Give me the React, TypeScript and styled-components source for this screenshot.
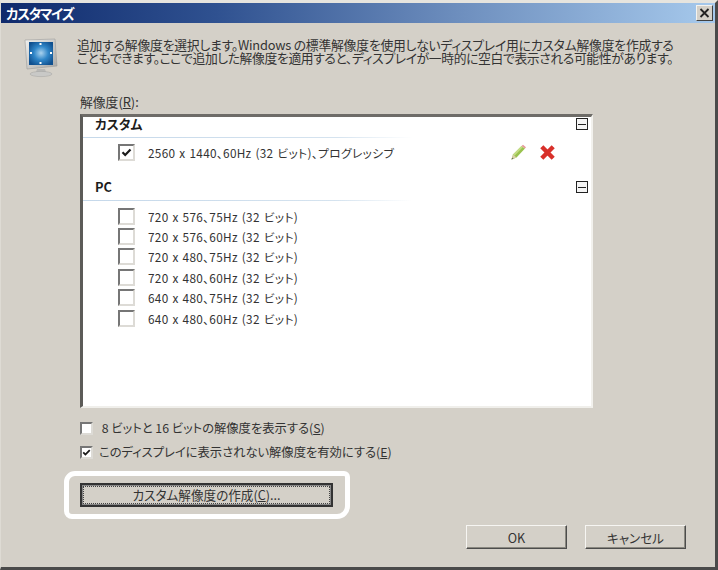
import React from "react";
import styled, { createGlobalStyle } from "styled-components";

const Global = createGlobalStyle`
  html, body { margin: 0; padding: 0; background: #d4d0c8; }
  body { font-family: "Noto Sans CJK JP", "Liberation Sans", sans-serif; color: #2a2a2a; font-feature-settings: "palt"; }
`;
const Win = styled.div`
  width: 718px; height: 570px; box-sizing: border-box; background: #d4d0c8;
  border-style: solid; border-width: 3px 3px 3px 1px;
  border-color: #e6e4de #4a4a4a #4a4a4a #dedbd4;
  display: flex; flex-direction: column; overflow: hidden;
`;
const TitleBar = styled.div`
  height: 20px; flex: none; display: flex; align-items: center; justify-content: space-between;
  padding: 0 2px 0 5px;
  background: linear-gradient(90deg, #0f2a6c 0%, #2f5190 30%, #6f90bf 65%, #a6c9ec 100%);
`;
const TitleText = styled.span`
  color: #fff; font-weight: 700; font-size: 13.5px; line-height: 20px; letter-spacing: -1.2px;
`;
const CloseBtn = styled.div`
  width: 17px; height: 16px; box-sizing: border-box; background: #d4d0c8; display: flex; align-items: center; justify-content: center;
  border: 1px solid; border-color: #f4f3ef #404040 #404040 #f4f3ef;
`;
const Body = styled.div`
  flex: 1; display: flex; flex-direction: column; padding: 15px 0 0 23px; position: relative;
`;
const Intro = styled.div`display: flex; gap: 19px; height: 55px;`;
const Description = styled.div`
  white-space: nowrap; font-size: 12.8px; line-height: 13px; color: #333;
`;
const DescLine = styled.div<{ $tight: number }>`
  letter-spacing: ${(p) => p.$tight}px;
`;
const Content = styled.div`
  margin-left: 56px; width: 513px; display: flex; flex-direction: column;
`;
const FieldLabel = styled.div`
  font-size: 12.8px; line-height: 16px; height: 20px; color: #333; margin-top: 1px;
  u { text-decoration: underline; }
`;
const ListBox = styled.div`
  height: 294px; box-sizing: border-box; background: #fff; position: relative;
  border-style: solid; border-width: 3px 2px 2px 3px; border-color: #6e6c68 #f2f1ed #f0efeb #5c5b58;
`;
const GroupHead = styled.div`
  height: 21px; margin-right: 2px; position: relative; padding-left: 12px; box-sizing: border-box;
  font-size: 12.8px; font-weight: 700; line-height: 14px; color: #1c1c1c;
  border-bottom: 1px solid; border-image: linear-gradient(90deg, #c5d8ea 0%, #d5e3ef 50%, #ffffff 65%) 1;
`;
const Collapse = styled.div`
  position: absolute; right: 1px; top: 1px; width: 12px; height: 12px; box-sizing: border-box;
  border: 1px solid #222; background: #f4f4f4; display: flex; align-items: center; justify-content: center;
  &::after { content: ""; width: 8px; height: 1px; background: #222; }
`;
const Rows = styled.div<{ $h: number; $top: number }>`
  height: ${(p) => p.$h}px; box-sizing: border-box; padding: ${(p) => p.$top}px 0 0 35px; display: flex; flex-direction: column;
`;
const Row = styled.div<{ $h?: number }>`
  height: ${(p) => p.$h ?? 20.4}px; display: flex; align-items: center; gap: 13px; font-size: 11.8px; color: #333; position: relative; word-spacing: 1px; letter-spacing: 0.3px;
`;
const Box = styled.div<{ $size: number }>`
  width: ${(p) => p.$size}px; height: ${(p) => p.$size}px; flex: none; box-sizing: border-box;
  background: #fff; display: flex; align-items: center; justify-content: center;
  border-style: solid; border-width: 2px; border-color: #767676 #dddbd6 #dddbd6 #767676;
`;
const RowActions = styled.div`position: absolute; left: 392px; top: 2px; display: flex; gap: 12px; align-items: center;`;
const OptionList = styled.div`display: flex; flex-direction: column; margin-top: 8px;`;
const Option = styled.div`
  height: 24px; display: flex; align-items: center; gap: 6px; font-size: 12.3px; color: #333;
  u { text-decoration: underline; }
`;
const Highlight = styled.div`
  margin: 7px 0 0 -16px; width: 286px; height: 48px; box-sizing: border-box;
  border: 5px solid #fff; border-radius: 11px 6px 13px 8px; display: flex; align-items: center; padding-left: 11px;
`;
const MainButton = styled.div`
  width: 253px; height: 24px; box-sizing: border-box; background: #d4d0c8; border: 2px solid #333;
  padding: 1px; box-shadow: inset 0 0 0 1px #888;
`;
const DottedInner = styled.div`
  height: 100%; box-sizing: border-box; border: 1px dotted #444; display: flex; align-items: center; justify-content: center;
  font-size: 12.6px; color: #333; padding-bottom: 1px;
  u { text-decoration: underline; }
`;
const Footer = styled.div`
  display: flex; gap: 18px; justify-content: flex-end; padding-right: 29px; margin-top: 6px;
`;
const DlgButton = styled.div`
  width: 101px; height: 24px; box-sizing: border-box; background: #d4d0c8; display: flex; align-items: center; justify-content: center;
  font-size: 12.6px; color: #333; border: 1px solid; border-color: #f6f5f2 #4c4c4c #4c4c4c #f6f5f2;
  box-shadow: inset -1px -1px 0 #8a8880;
`;

const Check = ({ s = 11 }: { s?: number }) => (
  <svg width={s} height={s} viewBox="0 0 11 11"><path d="M1.5 5.2 L4.2 8 L9.5 2.5" fill="none" stroke="#1a1a1a" strokeWidth="2.2" /></svg>
);
const MonitorIcon = () => (
  <svg width="34" height="40" viewBox="0 0 34 40" style={{ flex: "none" }}>
    <defs>
      <radialGradient id="scr" cx="50%" cy="48%" r="60%">
        <stop offset="0" stopColor="#a9d2ee" /><stop offset="0.5" stopColor="#2f86c8" /><stop offset="1" stopColor="#10508f" />
      </radialGradient>
      <linearGradient id="fr" x1="0" y1="0" x2="1" y2="1">
        <stop offset="0" stopColor="#f0f0ee" /><stop offset="1" stopColor="#a8a8a6" />
      </linearGradient>
    </defs>
    <path d="M1 2 L31 1 L33 28 L3 31 Z" fill="url(#fr)" stroke="#9c9c9a" strokeWidth="0.6" />
    <rect x="5" y="4" width="24" height="23" fill="url(#scr)" />
    <g fill="#fff">
      <rect x="15.5" y="5" width="2" height="2" /><rect x="15.5" y="24" width="2" height="2" />
      <rect x="6" y="14" width="2" height="2" /><rect x="26" y="14" width="2" height="2" />
    </g>
    <path d="M13 31 h8 l1 3 h-10 Z" fill="#b8b8b6" />
    <ellipse cx="17" cy="36" rx="11" ry="2.6" fill="#c9c9c7" stroke="#a2a2a0" strokeWidth="0.5" />
  </svg>
);
const Pencil = () => (
  <svg width="17" height="17" viewBox="0 0 17 17">
    <path d="M1.5 15.5 L3 10.5 L11.5 2 L15 4.5 L6.5 13.5 Z" fill="#9ac34e" />
    <path d="M3 10.5 L11.5 2 L13 3 L4.5 11.8 Z" fill="#c4dc84" />
    <path d="M11.5 2 L13 0.8 L16 3.2 L15 4.5 Z" fill="#e79a9a" />
    <path d="M1.5 15.5 L3 10.5 L6.5 13.5 Z" fill="#d8cfa8" />
    <path d="M1.5 15.5 L2.2 13.5 L3.6 14.7 Z" fill="#6b6b5a" />
  </svg>
);
const CrossRed = () => (
  <svg width="17" height="17" viewBox="0 0 17 17">
    <path d="M2.8 2.8 L14.2 14.2 M14.2 2.8 L2.8 14.2" stroke="#d8302a" strokeWidth="4.4" />
  </svg>
);

const pcRows = ["720 x 576、75Hz (32 ビット)", "720 x 576、60Hz (32 ビット)", "720 x 480、75Hz (32 ビット)", "720 x 480、60Hz (32 ビット)", "640 x 480、75Hz (32 ビット)", "640 x 480、60Hz (32 ビット)"];

export default function App() {
  return (
    <>
      <Global />
      <Win>
        <TitleBar>
          <TitleText>カスタマイズ</TitleText>
          <CloseBtn>
            <svg width="11" height="10" viewBox="0 0 11 10"><path d="M1.5 1 L9.5 9 M9.5 1 L1.5 9" stroke="#222" strokeWidth="1.8" /></svg>
          </CloseBtn>
        </TitleBar>
        <Body>
          <Intro>
            <MonitorIcon />
            <Description>
              <DescLine $tight={-0.2}>追加する解像度を選択します。Windows の標準解像度を使用しないディスプレイ用にカスタム解像度を作成する</DescLine>
              <DescLine $tight={-0.36}>こともできます。ここで追加した解像度を適用すると、ディスプレイが一時的に空白で表示される可能性があります。</DescLine>
            </Description>
          </Intro>
          <Content>
            <FieldLabel>解像度(<u>R</u>):</FieldLabel>
            <ListBox>
              <GroupHead>カスタム<Collapse /></GroupHead>
              <Rows $h={42} $top={4}>
                <Row $h={20}>
                  <Box $size={17}><Check /></Box>
                  <span>2560 x 1440、60Hz (32 ビット)、プログレッシブ</span>
                  <RowActions><Pencil /><CrossRed /></RowActions>
                </Row>
              </Rows>
              <GroupHead>PC<Collapse /></GroupHead>
              <Rows $h={150} $top={5}>
                {pcRows.map((r) => (
                  <Row key={r}><Box $size={17} /><span>{r}</span></Row>
                ))}
              </Rows>
            </ListBox>
            <OptionList>
              <Option><Box $size={13} /><span>&nbsp;8 ビットと 16 ビットの解像度を表示する(<u>S</u>)</span></Option>
              <Option><Box $size={13}><Check s={9} /></Box><span>このディスプレイに表示されない解像度を有効にする(<u>E</u>)</span></Option>
            </OptionList>
            <Highlight>
              <MainButton>
                <DottedInner><span>カスタム解像度の作成(<u>C</u>)...</span></DottedInner>
              </MainButton>
            </Highlight>
          </Content>
          <Footer>
            <DlgButton>OK</DlgButton>
            <DlgButton>キャンセル</DlgButton>
          </Footer>
        </Body>
      </Win>
    </>
  );
}
